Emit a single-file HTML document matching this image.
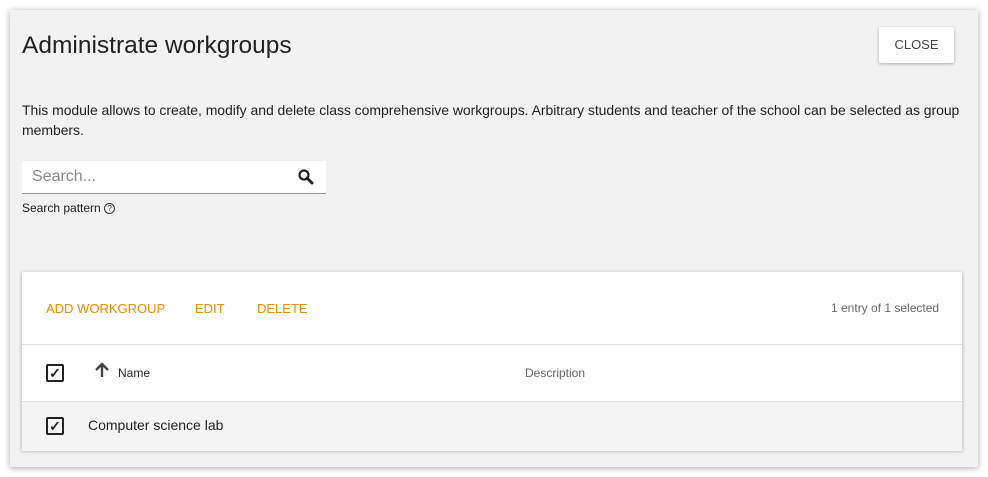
<!DOCTYPE html>
<html><head><style>
body{margin:0;width:988px;height:477px;background:#fff;font-family:"Liberation Sans",sans-serif;position:relative;overflow:hidden}
.dlg{position:absolute;left:10px;top:10px;width:968px;height:457px;background:#f2f2f2;box-shadow:0 1px 6px rgba(0,0,0,.35)}
.a{position:absolute}
.card{position:absolute;left:22px;top:272px;width:940px;height:178px;background:#fff;box-shadow:0 1px 4px rgba(0,0,0,.3)}
.cb{position:absolute;width:14px;height:14px;border:2px solid #222;border-radius:2px;font-size:14px;line-height:14px;text-align:center;color:#222;font-weight:bold}
.or{color:#f08a00;font-size:13px;top:301px}
</style></head><body>
<div class="dlg"></div>
<div class="a" style="left:22px;top:32px;font-size:24.5px;color:#222">Administrate workgroups</div>
<div class="a" style="left:879px;top:27px;width:75px;height:36px;background:#fff;border-radius:2px;box-shadow:0 1px 3px rgba(0,0,0,.3);font-size:13px;color:#444;text-align:center;line-height:36px">CLOSE</div>
<div class="a" style="left:22px;top:100px;width:950px;font-size:14px;line-height:20px;color:#222;letter-spacing:-0.05px">This module allows to create, modify and delete class comprehensive workgroups. Arbitrary students and teacher of the school can be selected as group members.</div>
<div class="a" style="left:22px;top:161px;width:304px;height:32px;background:#fff;border-bottom:1px solid #999"></div>
<div class="a" style="left:32px;top:168px;font-size:16px;color:#888">Search...</div>
<svg class="a" style="left:297px;top:168px" width="18" height="18" viewBox="0 0 18 18"><circle cx="7" cy="7" r="4.5" fill="none" stroke="#222" stroke-width="2.2"/><path d="M10 10l5 5" stroke="#222" stroke-width="3" stroke-linecap="round"/></svg>
<div class="a" style="left:22px;top:201px;font-size:12px;color:#222">Search pattern <span style="display:inline-block;width:9px;height:9px;border:1.3px solid #333;border-radius:50%;font-size:8px;line-height:9px;text-align:center;vertical-align:1px">?</span></div>
<div class="card"></div>
<div class="a or" style="left:46px">ADD WORKGROUP</div>
<div class="a or" style="left:195px">EDIT</div>
<div class="a or" style="left:257px">DELETE</div>
<div class="a" style="left:831px;top:301px;font-size:12px;color:#666">1 entry of 1 selected</div>
<div class="a" style="left:22px;top:344px;width:940px;height:1px;background:#e0e0e0"></div>
<div class="cb" style="left:46px;top:364px">✓</div>
<svg class="a" style="left:94px;top:362px" width="16" height="16" viewBox="0 0 16 16"><path d="M8 15V2M2 8l6-6 6 6" fill="none" stroke="#444" stroke-width="2.4"/></svg>
<div class="a" style="left:118px;top:366px;font-size:12px;color:#222">Name</div>
<div class="a" style="left:525px;top:366px;font-size:12px;color:#666">Description</div>
<div class="a" style="left:22px;top:401px;width:940px;height:49px;background:#f4f4f4;border-top:1px solid #ddd"></div>
<div class="cb" style="left:46px;top:417px">✓</div>
<div class="a" style="left:88px;top:417px;font-size:14px;color:#222">Computer science lab</div>
</body></html>
